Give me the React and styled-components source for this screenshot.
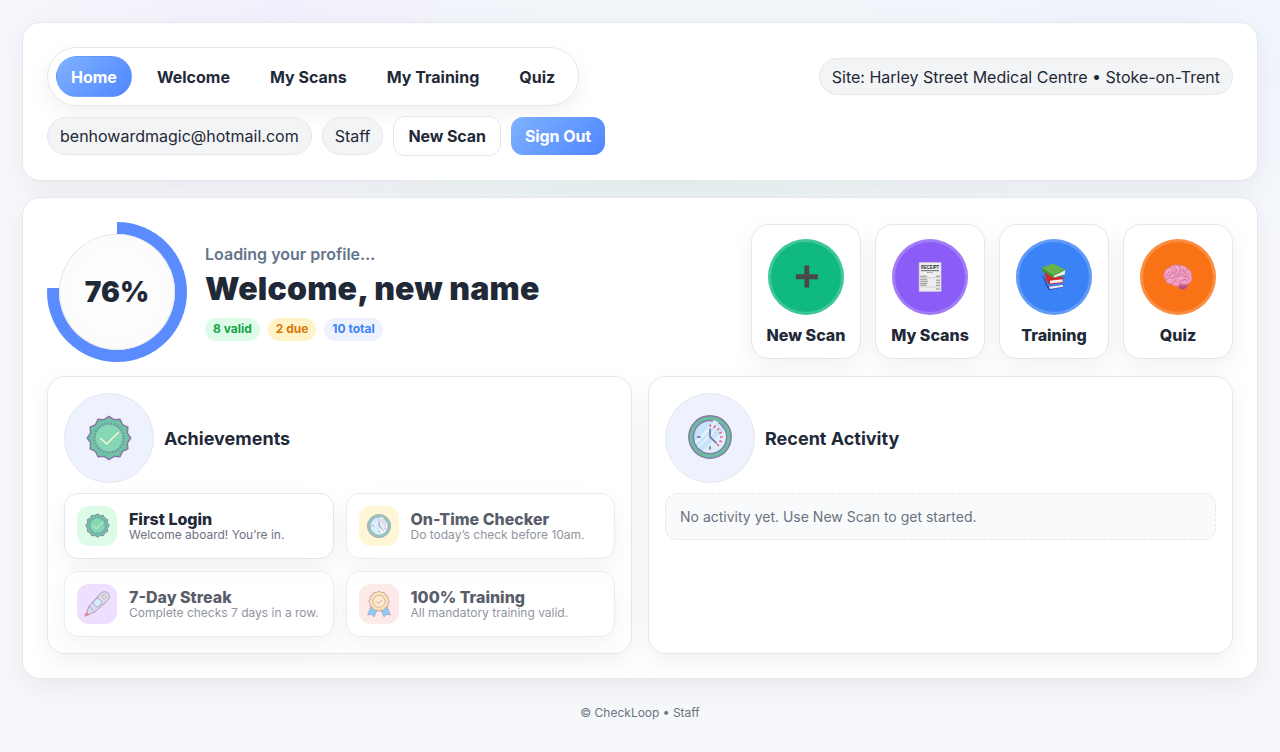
import React from "react";
import styled, { createGlobalStyle } from "styled-components";

const Global = createGlobalStyle`
  * { box-sizing: border-box; }
  body {
    margin: 0;
    min-height: 100vh;
    font-family: Inter, "Liberation Sans", sans-serif;
    font-size: 16px;
    color: #1f2937;
    background:
      radial-gradient(440px 300px at 22% 0%, rgba(168, 85, 247, 0.055), transparent 70%),
      radial-gradient(560px 380px at 88% 0%, rgba(59, 130, 246, 0.045), transparent 70%),
      radial-gradient(520px 400px at 52% 20%, rgba(16, 185, 129, 0.045), transparent 70%),
      #f6f8fc;
  }
`;

const Page = styled.div`
  padding: 22px;
  display: flex;
  flex-direction: column;
  gap: 16px;
`;
const Card = styled.section`
  background: #fff;
  border: 1px solid #e5e7eb;
  border-radius: 18px;
  padding: 24px;
  box-shadow: 0 10px 30px rgba(0, 0, 0, 0.06);
`;
const Header = styled(Card)`
  display: flex;
  flex-direction: column;
  gap: 10px;
`;
const TopRow = styled.div`
  display: flex;
  align-items: center;
  justify-content: space-between;
`;
const AccountRow = styled.div`
  display: flex;
  align-items: center;
  gap: 10px;
`;
const Nav = styled.nav`
  display: flex;
  gap: 10px;
  padding: 8px;
  border: 1px solid #e5e7eb;
  border-radius: 999px;
  background: #fff;
  box-shadow: 0 8px 24px rgba(0, 0, 0, 0.06);
`;
const NavLink = styled.a`
  padding: 11px 14px 9px;
  border: 1px solid transparent;
  border-radius: 999px;
  font-weight: 700;
  line-height: 19.36px;
  color: ${(p) => (p.$active ? "#fff" : "#1f2937")};
  background: ${(p) => (p.$active ? "linear-gradient(135deg, #7fb2ff, #4f86ff)" : "transparent")};
`;
const Chip = styled.span`
  padding: 9px 12px 7px;
  border: 1px solid #e5e7eb;
  border-radius: 999px;
  background: #f3f4f6;
  line-height: 19.36px;
`;
const Button = styled.button`
  font: inherit;
  font-weight: 700;
  line-height: 19.36px;
  letter-spacing: -0.09px;
  padding: 10px 14px 8px;
  border-radius: 12px;
  border: 1px solid #e5e7eb;
  background: #fff;
  color: #1f2937;
`;
const PrimaryButton = styled(Button)`
  border: 0;
  color: #fff;
  background: linear-gradient(135deg, #7fb2ff, #4f86ff);
`;
const Main = styled(Card)`
  display: flex;
  flex-direction: column;
  gap: 14px;
`;
const Hero = styled.div`
  display: flex;
  align-items: center;
  gap: 18px;
`;
const Ring = styled.div`
  width: 140px;
  height: 140px;
  padding: 12px;
  border-radius: 50%;
  background: conic-gradient(#5b8cff 0 76%, transparent 76%);
`;
const RingCore = styled.div`
  height: 100%;
  display: grid;
  place-items: center;
  border-radius: 50%;
  background: radial-gradient(circle, #fff, #fafafa);
  box-shadow: inset 0 0 0 1px #e5e7eb;
  font-size: 28px;
  font-weight: 900;
`;
const Intro = styled.div`
  flex: 1;
  padding-top: 1.4px;
`;
const Status = styled.div`
  padding-top: 1px;
  font-weight: 600;
  line-height: 19.36px;
  color: #64748b;
`;
const Title = styled.h1`
  margin: 6px 0 9px;
  font-size: 32px;
  line-height: 38.7px;
  font-weight: 900;
  letter-spacing: 0.2px;
`;
const Pills = styled.div`
  display: flex;
  gap: 8px;
`;
const tones = {
  ok: ["#dcfce7", "#16a34a"],
  warn: ["#fef3c7", "#d97706"],
  info: ["#eef2ff", "#3b82f6"],
};
const Pill = styled.span`
  padding: 4px 8px;
  border-radius: 999px;
  font-size: 12px;
  line-height: 14.5px;
  font-weight: 700;
  background: ${(p) => tones[p.$tone][0]};
  color: ${(p) => tones[p.$tone][1]};
`;
const Actions = styled.div`
  display: flex;
  gap: 14px;
`;
const Action = styled.a`
  width: 110px;
  display: flex;
  flex-direction: column;
  align-items: center;
  gap: 11px;
  padding: 14px 0 13px;
  border: 1px solid #e5e7eb;
  border-radius: 18px;
  background: #fff;
  box-shadow: 0 8px 24px rgba(0, 0, 0, 0.06);
  font-weight: 800;
  line-height: 19.5px;
`;
const ActionDisc = styled.span`
  width: 76px;
  height: 76px;
  display: grid;
  place-items: center;
  border-radius: 50%;
  background: ${(p) => p.$color};
  box-shadow: inset 0 0 0 3px rgba(255, 255, 255, 0.2);
`;
const Panels = styled.div`
  display: grid;
  grid-template-columns: 1fr 1fr;
  gap: 16px;
`;
const Panel = styled.section`
  display: flex;
  flex-direction: column;
  gap: 10px;
  padding: 16px;
  border: 1px solid #e5e7eb;
  border-radius: 18px;
  background: #fff;
  box-shadow: 0 8px 24px rgba(0, 0, 0, 0.06);
`;
const PanelHead = styled.div`
  display: flex;
  align-items: center;
  gap: 10px;
`;
const PanelIcon = styled.span`
  width: 90px;
  height: 90px;
  display: grid;
  place-items: center;
  padding: ${(p) => (p.$raised ? "0 1px 2px 0" : "0")};
  border: 1px solid #e5e7eb;
  border-radius: 50%;
  background: #eef2ff;
`;
const PanelTitle = styled.h2`
  margin: 0;
  padding-top: 2px;
  font-size: 18px;
  font-weight: 700;
`;
const Badges = styled.div`
  display: grid;
  grid-template-columns: 1fr 1fr;
  gap: 12px;
`;
const Badge = styled.div`
  display: flex;
  align-items: center;
  gap: 12px;
  padding: 12px;
  border: 1px solid #e5e7eb;
  border-radius: 14px;
  background: #fff;
  box-shadow: 0 8px 24px rgba(0, 0, 0, 0.06);
  opacity: ${(p) => (p.$locked ? 0.75 : 1)};
`;
const BadgeIcon = styled.span`
  width: 40px;
  height: 40px;
  display: grid;
  place-items: center;
  border-radius: 12px;
  background: ${(p) => p.$color};
`;
const BadgeTitle = styled.div`
  padding-top: 1px;
  margin-bottom: -1px;
  font-weight: 800;
  line-height: 19.36px;
`;
const BadgeText = styled.div`
  font-size: 12px;
  line-height: 14.5px;
  color: #6b7280;
  white-space: nowrap;
`;
const Empty = styled.div`
  padding: 14px;
  border: 1px dashed #e5e7eb;
  border-radius: 12px;
  background: #f9fafb;
  font-size: 14px;
  line-height: 17px;
  color: #6b7280;
`;
const Footer = styled.footer`
  padding-top: 10px;
  text-align: center;
  font-size: 12px;
  line-height: 15px;
  color: #6b7280;
`;

const polar = (cx, cy, r, deg) => {
  const a = (deg * Math.PI) / 180;
  return [(cx + r * Math.sin(a)).toFixed(2), (cy - r * Math.cos(a)).toFixed(2)];
};
const scallop = (cx, cy, outer, inner, n) => {
  let d = "";
  for (let i = 0; i < n; i++) {
    const step = 360 / n;
    const tip = polar(cx, cy, outer, i * step);
    const dip = polar(cx, cy, inner, (i + 0.5) * step);
    d += `${i ? "L" : "M"}${tip} L${dip} `;
  }
  return d + "Z";
};

const SealIcon = ({ size }) => (
  <svg width={size} height={size} viewBox="0 0 44 44">
    <path d={scallop(22, 22, 20.8, 18.2, 12)} fill="#6cc4a4" stroke="#8c75a6" strokeWidth="1.4" strokeLinejoin="round" />
    <circle cx="22" cy="22" r="13" fill="#86d7b5" />
    <circle cx="22" cy="22" r="13.8" fill="none" stroke="#8079a5" strokeWidth="2.2" strokeDasharray="1 1.89" />
    <path d="M14 22.3l5.7 5.4L31 16.7" fill="none" stroke="#fff3dc" strokeWidth="1.4" strokeLinecap="round" />
  </svg>
);

const ClockIcon = ({ size, clip }) => (
  <svg width={size} height={size} viewBox="0 0 44 44">
    <clipPath id={clip}><circle cx="22" cy="22" r="15.8" /></clipPath>
    <circle cx="22" cy="22" r="21.2" fill="#68bea0" stroke="#8c75a6" strokeWidth="1.4" />
    <circle cx="22" cy="22" r="16.5" fill="#c5e3fa" stroke="#8c75a6" strokeWidth="1.4" />
    <g clipPath={`url(#${clip})`} fill="none">
      <path d="M2 33L34 1" stroke="#e3f2fd" strokeWidth="3" />
      <path d="M5 37L37 5" stroke="#e3f2fd" strokeWidth="1.6" />
      <path d="M17 42L42 17" stroke="#deeefb" strokeWidth="12" />
    </g>
    <path d="M25 6.2l5.4 2.200" stroke="#d5eee5" strokeWidth="2.5" />
    {[2, 24, 46, 68, 90, 112, 135].map((a) => (
      <path key={a} d={`M${polar(22, 22, 10, a)}L${polar(22, 22, 12.7, a)}`} stroke="#f0607a" strokeWidth="1.5" />
    ))}
    <path d="M22 14v8l6.3 6M22 31.8V34M9.7 22H12" fill="none" stroke="#765f94" strokeWidth="1.5" strokeLinecap="round" />
  </svg>
);

const ThermometerIcon = () => (
  <svg width="28" height="28" viewBox="0 0 28 28" stroke="#8c75a6" strokeLinejoin="round" strokeLinecap="round">
    <path d="M2.3 25.600L6.200 16 17.500 3.500C19.800 1.100 22.800 1.300 24.800 3.200 26.800 5.200 26.900 8.200 24.500 10.500L12 21.800Z" fill="#ccd1e6" strokeWidth="1" />
    <path d="M6.500 16.300l5 5.200" fill="none" strokeWidth=".7" />
    <path d="M2.300 25.700l1.200-2.900 1.700 1.700Z" fill="#f26a82" stroke="#db627d" strokeWidth="1.5" />
    <rect x="11" y="9.3" width="7.4" height="7" rx="2" transform="rotate(-43 14.5 13)" fill="#c8e8fb" strokeWidth=".8" />
    <rect x="19.3" y="5.1" width="3.7" height="3.7" rx="1.5" transform="rotate(-43 21 7)" fill="#ffd79d" strokeWidth=".6" />
  </svg>
);

const RosetteIcon = () => (
  <svg width="28" height="28" viewBox="0 0 28 28" stroke="#9b7bab" strokeWidth=".8" strokeLinejoin="round">
    <path d="M6.500 15.500L2.500 25l4.200-.6 2.200 2.500 4.100-9ZM21.500 15.500l4 9.500-4.200-.6-2.200 2.500-4.100-9Z" fill="#64bdf7" />
    <path d={scallop(14, 11.3, 10.3, 9.1, 12)} fill="#fcd488" />
    <circle cx="14" cy="11.3" r="6" fill="#ffe4b8" strokeWidth=".6" />
    <circle cx="14" cy="11.3" r="7.7" fill="none" stroke="#fff5de" strokeDasharray="1 1.4" />
    <path d="M10.700 11.200l2.400 2.400 4.200-4" fill="none" />
  </svg>
);

const PlusIcon = () => (
  <svg width="30" height="30" viewBox="0 0 30 30">
    <path d="M13.400 3.500h4.800v8.800h8.800v5h-8.800v8.300h-4.800v-8.300H4.800v-5h8.600Z" fill="#494949" />
  </svg>
);

const ReceiptIcon = () => (
  <svg width="30" height="30" viewBox="0 0 30 30">
    <path d="M4.100.5h22v29h-22Z" fill="#eeeef0" stroke="#c9c6d2" strokeWidth=".5" />
    <text x="15.1" y="7" textAnchor="middle" fontFamily="Liberation Sans, sans-serif" fontWeight="700" fontSize="4.8" textLength="18" lengthAdjust="spacingAndGlyphs" fill="#292929">RECEIPT</text>
    <path d="M6 8.700h18" stroke="#525252" strokeWidth=".9" />
    <path d="M12 10.500h6" stroke="#999" strokeWidth="1" strokeDasharray="2 .7" />
    <path d="M5.200 14.200h6.400M5.200 17.200h7M5.200 19.300h8M5.200 21.400h7.200M5.200 23.200h6.500M21 14.200h4M21 18.200h4M21 20.700h4M21 23.200h4M21 27h4" stroke="#747474" strokeWidth=".8" />
    <path d="M5 15.600h20M5 25h20" stroke="#b6b6b6" strokeWidth=".5" />
  </svg>
);

const BooksIcon = () => (
  <svg width="30" height="30" viewBox="0 0 30 30">
    <path d="M3 13l2 2 4 9.500 15-2 .8 2.600L10.500 28 8.500 26.500Z" fill="#35458b" />
    <path d="M9.800 24.800l14-2 .6 2-13.400 2.200Z" fill="#eceaf0" />
    <path d="M5.500 10.500l1.500 7.500 3.500 4.600 13.500-1.800.2-5.300Z" fill="#d4262b" />
    <path d="M10.500 18.800l12.800-1.600.5 2.700-12.800 1.500Z" fill="#f6efec" />
    <path d="M10.300 18.500l-.2 3.600" fill="none" stroke="#a5161d" strokeWidth=".9" />
    <path d="M2.700 5.700L14 1.500l12.200 6.200L14.500 13.400Z" fill="#66b448" />
    <path d="M14.500 13.400l11.700-5.700-.4 5-10.900 3.200Z" fill="#f1f2e9" />
    <path d="M14.700 16l11.200-3.200M14.500 13.500L26.200 7.800" fill="none" stroke="#3b8a2e" strokeWidth=".8" />
    <path d="M2.700 5.700l11.800 7.700v2.700L3 9Z" fill="#3f9430" />
  </svg>
);

const BrainIcon = () => (
  <svg width="32" height="30" viewBox="0 0 32 30">
    <path d="M16 22.500c2-2 7-2.300 9.500 0 .8 3-2.300 5.500-5.300 5.200-3-.3-4.700-2.300-4.200-5.200Z" fill="#c75f8e" />
    <path d="M17.500 24c2 1.800 5 1.800 7 0M18.200 26.200c1.800.8 3.400.6 4.800-.5" fill="none" stroke="#993f6c" strokeWidth=".7" />
    <path d="M2 14.500C1.200 10 4 6.500 7.500 5.500 10 2.600 14 2.300 17 3.200c3.500-.4 7 1 8.300 3.300 3.200 1.300 4.600 4.300 4.100 7 1.500 3.500.2 7.300-3.200 8.200-3 1.700-6 .2-8 .3-2.700 3.500-7 2.600-8.500.1-4 .2-5.900-1.800-5.500-4.100-1.300-.8-2-2-2.200-3.500Z" fill="#ef9cc0" stroke="#d4719f" strokeWidth=".5" />
    <path d="M4.500 14c.3-3 2.400-2 3-4.500M7.500 6c.2 2.500 4 1.400 3 5-1.300 2-3.700 1.500-3.500 4M12 4.200c-.5 2.700 3.200 2 2.500 5-2 .4-2 2-1.800 3.500M17 3.500c-1.500 2.500 2.300 2.400 1.500 5.500-1 2-3 1.500-2.500 4M22 5c-2 1.700.8 3-1 5M25.200 7c-1 2-3 1.500-2.500 4.200 1 1.300 3.200.4 3.700 2.500M4.500 17.700c2.800-2.500 5 .3 7-2 2.200-2.300 4.400.2 5.500-2 2-2.300 4.500-1 5 .8 2.500-.4 4.500.2 5 2.500M10 21.500c.2-2.500 3.500-1.300 4-3.800M18.500 21.800c-1.400-2 .5-3.500 2.500-3.500 1.300-1.500 3.500-1 4 .5" fill="none" stroke="#c5689a" strokeWidth=".75" strokeLinecap="round" />
    <path d="M5 10.500c1-2.500 2.500-3.300 4-2.700M13.500 5.500c2-.7 3 .1 2.700 1.700M20.300 6c1.700-.6 3 .3 3.200 1M17 16.700c1.700-1 2.700-.3 3-.1M7 17.500c1.300-.5 2.500.2 3 .5" fill="none" stroke="#ffc9df" strokeWidth=".9" strokeLinecap="round" />
  </svg>
);

const links = ["Home", "Welcome", "My Scans", "My Training", "Quiz"];
const actions = [
  ["New Scan", "#10b981", <PlusIcon />],
  ["My Scans", "#8b5cf6", <ReceiptIcon />],
  ["Training", "#3b82f6", <BooksIcon />],
  ["Quiz", "#f97316", <BrainIcon />],
];
const badges = [
  ["First Login", "Welcome aboard! You’re in.", "#dcfce7", <SealIcon size={25} />, false],
  ["On-Time Checker", "Do today’s check before 10am.", "#fef3c7", <ClockIcon size={24} clip="face-small" />, true],
  ["7-Day Streak", "Complete checks 7 days in a row.", "#e9d5ff", <ThermometerIcon />, true],
  ["100% Training", "All mandatory training valid.", "#fee2e2", <RosetteIcon />, true],
];

export default function App() {
  return (
    <>
      <Global />
      <Page>
        <Header as="header">
          <TopRow>
            <Nav>
              {links.map((label, i) => (
                <NavLink key={label} $active={i === 0}>{label}</NavLink>
              ))}
            </Nav>
            <Chip>Site: Harley Street Medical Centre • Stoke-on-Trent</Chip>
          </TopRow>
          <AccountRow>
            <Chip>benhowardmagic@hotmail.com</Chip>
            <Chip>Staff</Chip>
            <Button>New Scan</Button>
            <PrimaryButton>Sign Out</PrimaryButton>
          </AccountRow>
        </Header>
        <Main as="main">
          <Hero>
            <Ring>
              <RingCore>76%</RingCore>
            </Ring>
            <Intro>
              <Status>Loading your profile…</Status>
              <Title>Welcome, new name</Title>
              <Pills>
                <Pill $tone="ok">8 valid</Pill>
                <Pill $tone="warn">2 due</Pill>
                <Pill $tone="info">10 total</Pill>
              </Pills>
            </Intro>
            <Actions>
              {actions.map(([label, color, icon]) => (
                <Action key={label}>
                  <ActionDisc $color={color}>{icon}</ActionDisc>
                  {label}
                </Action>
              ))}
            </Actions>
          </Hero>
          <Panels>
            <Panel>
              <PanelHead>
                <PanelIcon><SealIcon size={46} /></PanelIcon>
                <PanelTitle>Achievements</PanelTitle>
              </PanelHead>
              <Badges>
                {badges.map(([title, text, color, icon, locked]) => (
                  <Badge key={title} $locked={locked}>
                    <BadgeIcon $color={color}>{icon}</BadgeIcon>
                    <div>
                      <BadgeTitle>{title}</BadgeTitle>
                      <BadgeText>{text}</BadgeText>
                    </div>
                  </Badge>
                ))}
              </Badges>
            </Panel>
            <Panel>
              <PanelHead>
                <PanelIcon $raised><ClockIcon size={44} clip="face-large" /></PanelIcon>
                <PanelTitle>Recent Activity</PanelTitle>
              </PanelHead>
              <Empty>No activity yet. Use New Scan to get started.</Empty>
            </Panel>
          </Panels>
        </Main>
        <Footer>© CheckLoop • Staff</Footer>
      </Page>
    </>
  );
}
